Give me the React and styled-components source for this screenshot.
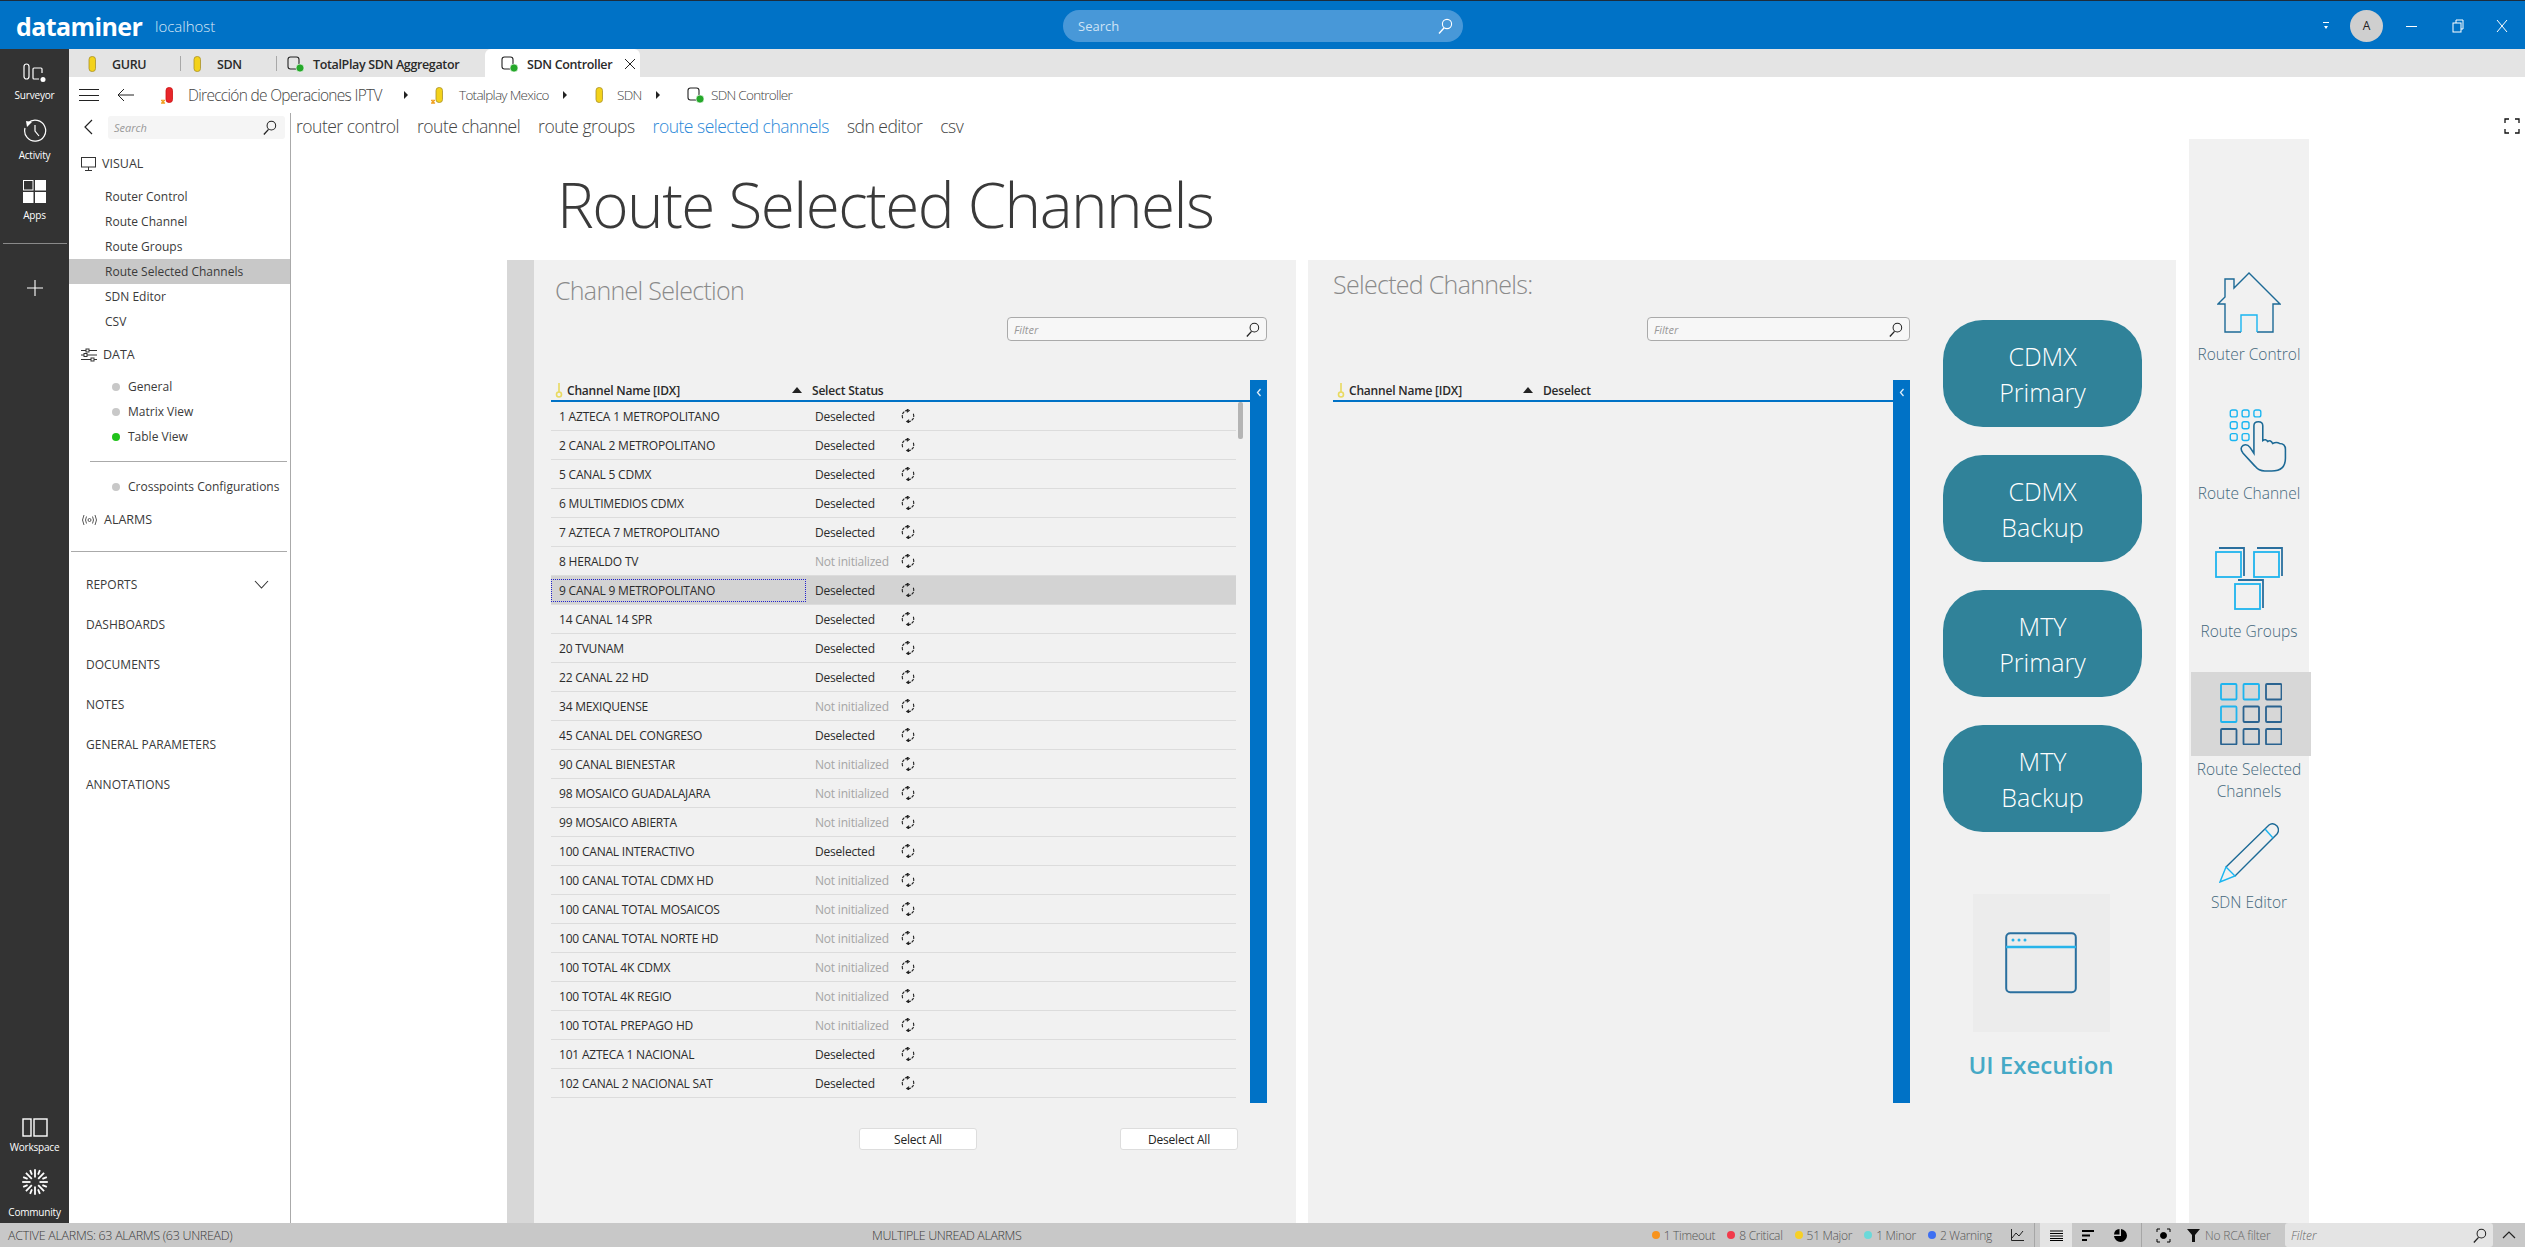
import React from 'react'
import styled, { createGlobalStyle } from 'styled-components'

const FONT = `"Open Sans", "Noto Sans", sans-serif`

const rows = [
    ['1 AZTECA 1 METROPOLITANO', 'Deselected'],
    ['2 CANAL 2 METROPOLITANO', 'Deselected'],
    ['5 CANAL 5 CDMX', 'Deselected'],
    ['6 MULTIMEDIOS CDMX', 'Deselected'],
    ['7 AZTECA 7 METROPOLITANO', 'Deselected'],
    ['8 HERALDO TV', 'Not initialized'],
    ['9 CANAL 9 METROPOLITANO', 'Deselected'],
    ['14 CANAL 14 SPR', 'Deselected'],
    ['20 TVUNAM', 'Deselected'],
    ['22 CANAL 22 HD', 'Deselected'],
    ['34 MEXIQUENSE', 'Not initialized'],
    ['45 CANAL DEL CONGRESO', 'Deselected'],
    ['90 CANAL BIENESTAR', 'Not initialized'],
    ['98 MOSAICO GUADALAJARA', 'Not initialized'],
    ['99 MOSAICO ABIERTA', 'Not initialized'],
    ['100 CANAL INTERACTIVO', 'Deselected'],
    ['100 CANAL TOTAL CDMX HD', 'Not initialized'],
    ['100 CANAL TOTAL MOSAICOS', 'Not initialized'],
    ['100 CANAL TOTAL NORTE HD', 'Not initialized'],
    ['100 TOTAL 4K CDMX', 'Not initialized'],
    ['100 TOTAL 4K REGIO', 'Not initialized'],
    ['100 TOTAL PREPAGO HD', 'Not initialized'],
    ['101 AZTECA 1 NACIONAL', 'Deselected'],
    ['102 CANAL 2 NACIONAL SAT', 'Deselected'],
]

const Global = createGlobalStyle`
    html, body { margin: 0; padding: 0; background: #fff; }
    body { font-family: ${FONT}; color: #333; }
    * { box-sizing: border-box; }
`

/* icons */
const SearchIcon = ({ size = 16, color = '#222' }) => (
    <svg width={size} height={size} viewBox="0 0 16 16" fill="none" stroke={color} strokeWidth="1.1">
        <circle cx="10" cy="6" r="4.6" />
        <path d="M7 10 L2 15.5" strokeWidth="1.4" />
    </svg>
)

const Pill = ({ color = '#f3d21a', edge = '#a8912a', badge }) => (
    <svg width="14" height="17" viewBox="0 0 14 17">
        <rect x="5" y="0.5" width="6.5" height="15" rx="3" fill={color} stroke={edge} strokeWidth="0.8" />
        {badge && <path d="M0 13 L4 16.5 M4 13 L0 16.5 M2 12.5 V17" stroke="#f0a020" strokeWidth="1.1" />}
    </svg>
)

const ServiceIcon = () => (
    <svg width="18" height="18" viewBox="0 0 18 18" fill="none">
        <rect x="1" y="2" width="11" height="12" rx="2.5" stroke="#222" strokeWidth="1.1" />
        <circle cx="13" cy="13" r="4" fill="#25a82a" stroke="#fff" strokeWidth="0.6" />
    </svg>
)

const RefreshIcon = () => (
    <svg width="14" height="14" viewBox="0 0 14 14" fill="none" stroke="#222" strokeWidth="1.1">
        <path d="M1.7 9.2 A5.6 5.6 0 0 1 7.6 1.4" strokeDasharray="3.2 0.9" />
        <path d="M5.8 0 L8.2 1.5 L5.8 3.2" />
        <path d="M12.3 4.8 A5.6 5.6 0 0 1 6.4 12.6" strokeDasharray="3.2 0.9" />
        <path d="M8.2 10.8 L5.8 12.5 L8.2 14" />
    </svg>
)

const KeyIcon = () => (
    <svg width="8" height="15" viewBox="0 0 8 15" fill="none" stroke="#e9da5f" strokeWidth="1.6">
        <path d="M4 0 V9" />
        <circle cx="4" cy="11.5" r="2.5" />
    </svg>
)

const CommunityIcon = () => (
    <svg width="26" height="26" viewBox="-13 -13 26 26" stroke="#fff" strokeWidth="1.8">
        {Array.from({ length: 16 }, (_, i) => {
            const a = (i * Math.PI) / 8
            const inner = i % 2 ? 8 : 4.5
            return (
                <line
                    key={i}
                    x1={Math.sin(a) * inner}
                    y1={-Math.cos(a) * inner}
                    x2={Math.sin(a) * 12.8}
                    y2={-Math.cos(a) * 12.8}
                />
            )
        })}
    </svg>
)

const Dot = styled.span`
    display: inline-block;
    width: ${p => p.$size || 8}px;
    height: ${p => p.$size || 8}px;
    border-radius: 50%;
    background: ${p => p.$color};
    flex: none;
`

const Page = styled.div`
    width: 2525px;
    height: 1247px;
    display: flex;
    flex-direction: column;
    overflow: hidden;
`

/* top bar */
const TopBar = styled.header`
    height: 49px;
    flex: none;
    background: #0072c6;
    border-top: 1px solid #1d2c3c;
    display: flex;
    align-items: center;
    color: #fff;
    padding: 1px 0 0 16px;
`
const Logo = styled.div`
    font-size: 25px;
    font-weight: 700;
    letter-spacing: -0.6px;
    width: 139px;
`
const Host = styled.div`
    font-size: 15px;
    font-weight: 300;
    color: #dbe9f6;
    width: 908px;
`
const GlobalSearch = styled.div`
    width: 400px;
    height: 32px;
    border-radius: 16px;
    background: #4898d8;
    display: flex;
    align-items: center;
    justify-content: space-between;
    padding: 0 10px 0 15px;
    font-size: 13px;
    color: #cfe3f5;
`
const WindowControls = styled.div`
    margin-left: auto;
    display: flex;
    align-items: center;
    padding-right: 16px;
`
const Caret = styled.div`
    width: 6px;
    height: 8px;
    margin-right: 21px;
    border-top: 1px solid #fff;
    position: relative;
    &::after {
        content: '';
        position: absolute;
        top: 3px;
        left: 1px;
        border-left: 2px solid transparent;
        border-right: 2px solid transparent;
        border-top: 3px solid #fff;
    }
`
const Avatar = styled.div`
    width: 33px;
    height: 32px;
    border-radius: 50%;
    background: #cfcfcf;
    color: #222;
    font-size: 12px;
    display: flex;
    align-items: center;
    justify-content: center;
    margin-right: 22px;
`
const WinBtn = styled.svg`
    width: 14px;
    height: 14px;
    margin-right: ${p => p.$gap || 0}px;
`

/* frame */
const Frame = styled.div`
    flex: 1;
    min-height: 0;
    display: flex;
`
const Rail = styled.nav`
    width: 69px;
    flex: none;
    background: #333;
    display: flex;
    flex-direction: column;
    align-items: center;
    color: #fff;
`
const RailItem = styled.div`
    width: 100%;
    height: ${p => p.$height || 60}px;
    flex: none;
    display: flex;
    flex-direction: column;
    align-items: center;
    justify-content: flex-end;
    padding-bottom: 7px;
    font-size: 10px;
    line-height: 14px;
    letter-spacing: -0.2px;
    svg { margin-bottom: ${p => p.$iconGap || 5}px; }
`
const RailDivider = styled.div`
    width: 64px;
    height: 1px;
    background: #8a8a8a;
    margin-top: 14px;
`
const RailPlus = styled.div`
    margin-top: 36px;
    display: flex;
`
const RailBottom = styled.div`
    margin-top: auto;
    margin-bottom: -3px;
    width: 100%;
    display: flex;
    flex-direction: column;
`

const Main = styled.div`
    flex: 1;
    min-width: 0;
    display: flex;
    flex-direction: column;
`
const TabStrip = styled.div`
    height: 28px;
    flex: none;
    background: #e4e4e4;
    display: flex;
    padding-left: 15px;
    align-items: stretch;
`
const Tab = styled.div`
    width: ${p => p.$width}px;
    display: flex;
    align-items: center;
    gap: ${p => p.$gap || 8}px;
    padding-left: ${p => p.$pad || 0}px;
    padding-top: 2px;
    font-size: 12.5px;
    font-weight: 600;
    letter-spacing: -0.35px;
    color: #2a2a2a;
    position: relative;
    background: ${p => (p.$active ? '#fff' : 'transparent')};
    border-radius: ${p => (p.$active ? '6px 6px 0 0' : '0')};
`
const TabDivider = styled.span`
    width: 1px;
    height: 15px;
    background: #a8a8a8;
    align-self: center;
    margin-right: ${p => p.$gap}px;
`
const TabClose = styled.svg`
    width: 12px;
    height: 12px;
    margin-left: 4px;
`

const Crumbs = styled.div`
    height: 36px;
    flex: none;
    display: flex;
    align-items: center;
    padding-left: 10px;
    color: #444;
`
const Burger = styled.div`
    width: 20px;
    height: 12px;
    border-top: 1px solid #222;
    border-bottom: 1px solid #222;
    margin-right: 18px;
    position: relative;
    &::after {
        content: '';
        position: absolute;
        left: 0;
        right: 0;
        top: 4.5px;
        height: 1px;
        background: #222;
    }
`
const Crumb = styled.div`
    display: flex;
    align-items: center;
    font-size: ${p => p.$size}px;
    font-weight: 300;
    letter-spacing: -0.7px;
    gap: ${p => p.$gap}px;
    width: ${p => p.$width}px;
    white-space: nowrap;
`
const CrumbArrow = styled.span`
    width: 0;
    height: 0;
    border-left: 4px solid #222;
    border-top: 4px solid transparent;
    border-bottom: 4px solid transparent;
    flex: none;
    margin-left: auto;
    margin-right: ${p => p.$gap}px;
`

const Content = styled.div`
    flex: 1;
    min-height: 0;
    display: flex;
`

/* sidebar */
const Sidebar = styled.aside`
    width: 222px;
    flex: none;
    border-right: 1px solid #aaa;
    display: flex;
    flex-direction: column;
    font-size: 12px;
    color: #3a3a3a;
`
const SideSearchRow = styled.div`
    height: 38px;
    flex: none;
    display: flex;
    align-items: center;
    padding: 0 4px 10px 15px;
    gap: 15px;
`
const SideSearch = styled.div`
    width: 177px;
    height: 23px;
    background: #f5f5f5;
    border-radius: 3px;
    display: flex;
    align-items: center;
    justify-content: space-between;
    padding: 0 8px 0 6px;
    font-size: 11px;
    font-style: italic;
    color: #999;
`
const SideHead = styled.div`
    height: 25px;
    flex: none;
    display: flex;
    align-items: center;
    gap: 6px;
    padding-left: 12px;
    margin-top: ${p => p.$top || 0}px;
    font-size: 12.5px;
`
const SideItem = styled.div`
    height: 25px;
    flex: none;
    display: flex;
    align-items: center;
    padding-left: 36px;
    margin-top: ${p => p.$top || 0}px;
    background: ${p => (p.$active ? '#c8c8c8' : 'transparent')};
`
const SideDataItem = styled(SideItem)`
    padding-left: 43px;
    gap: 8px;
`
const SideRule = styled.div`
    height: 1px;
    background: #aaa;
    margin-left: ${p => p.$left}px;
    margin-right: 3px;
    margin-top: ${p => p.$top}px;
    flex: none;
`
const SideLink = styled.div`
    height: 40px;
    flex: none;
    display: flex;
    align-items: center;
    justify-content: space-between;
    padding: 0 21px 0 17px;
    margin-top: ${p => p.$top || 0}px;
`

/* workspace */
const Workspace = styled.main`
    flex: 1;
    min-width: 0;
    display: flex;
    flex-direction: column;
    position: relative;
`
const DashTabs = styled.div`
    height: 26px;
    flex: none;
    display: flex;
    align-items: center;
    gap: 18px;
    padding-left: 5px;
    font-size: 17.5px;
    font-weight: 300;
    letter-spacing: -0.5px;
    color: #444;
`
const DashTab = styled.span`
    color: ${p => (p.$active ? '#2b88d8' : '#444')};
`
const FullScreen = styled.svg`
    position: absolute;
    top: 5px;
    right: 5px;
    width: 16px;
    height: 16px;
`
const Board = styled.div`
    flex: 1;
    min-height: 0;
    display: flex;
    padding-left: 216px;
`
const Center = styled.div`
    width: 1682px;
    flex: none;
    display: flex;
    flex-direction: column;
`
const Title = styled.h1`
    height: 121px;
    flex: none;
    margin: 0;
    padding: 23px 0 0 50px;
    font-size: 62px;
    line-height: 84px;
    font-weight: 300;
    letter-spacing: -1.55px;
    color: #3a3a3a;
`
const Panels = styled.div`
    flex: 1;
    min-height: 0;
    display: flex;
    gap: 12px;
`
const ChannelPanel = styled.section`
    width: 789px;
    flex: none;
    background: #f1f1f1;
    border-left: 27px solid #d7d7d7;
    padding: 12px 29px 0 17px;
    display: flex;
    flex-direction: column;
`
const SelectedPanel = styled.section`
    width: 868px;
    flex: none;
    background: #f1f1f1;
    padding: 6px 0 0 25px;
    display: flex;
    gap: 33px;
`
const SelectedList = styled.div`
    width: 577px;
    flex: none;
    display: flex;
    flex-direction: column;
`
const PanelTitle = styled.h2`
    margin: 0 0 0 ${p => p.$left || 0}px;
    font-size: 25px;
    line-height: 36px;
    font-weight: 300;
    letter-spacing: -0.7px;
    color: #8a8a8a;
`
const FilterBox = styled.div`
    width: ${p => p.$width}px;
    height: 24px;
    flex: none;
    align-self: flex-end;
    margin-top: ${p => p.$top}px;
    background: #f7f7f7;
    border: 1px solid #aaa;
    border-radius: 4px;
    display: flex;
    align-items: center;
    justify-content: space-between;
    padding: 0 6px;
    font-size: 11px;
    font-style: italic;
    color: #999;
`
const TableArea = styled.div`
    height: 723px;
    flex: none;
    margin-top: 39px;
    display: flex;
`
const TableWrap = styled.div`
    flex: 1;
    min-width: 0;
    position: relative;
`
const CollapseBar = styled.div`
    width: 17px;
    flex: none;
    background: #0072c6;
    display: flex;
    justify-content: center;
    padding-top: 8px;
`
const HeadRow = styled.div`
    height: 22px;
    display: grid;
    grid-template-columns: ${p => p.$cols};
    border-bottom: 2px solid #0072c6;
    font-size: 12px;
    font-weight: 600;
    letter-spacing: -0.2px;
    color: #2a2a2a;
    align-items: center;
`
const HeadName = styled.div`
    display: flex;
    align-items: center;
    gap: 4px;
    padding-left: 4px;
    padding-right: 4px;
    svg { flex: none; }
`
const SortArrow = styled.span`
    margin-left: auto;
    width: 0;
    height: 0;
    border-left: 5px solid transparent;
    border-right: 5px solid transparent;
    border-bottom: 6px solid #222;
`
const HeadStatus = styled.div`
    padding-left: 6px;
`
const Row = styled.div`
    width: 685px;
    height: 29px;
    display: grid;
    grid-template-columns: 255px 95px 1fr;
    align-items: center;
    border-bottom: 1px solid #dcdcdc;
    background: ${p => (p.$selected ? '#d3d3d3' : 'transparent')};
    font-size: 12px;
    letter-spacing: -0.2px;
    color: #2c2c2c;
`
const NameCell = styled.div`
    height: 23px;
    display: flex;
    align-items: center;
    padding-left: 7px;
    border: 1px dotted ${p => (p.$focus ? '#2222cc' : 'transparent')};
    white-space: nowrap;
`
const StatusCell = styled.div`
    padding-left: 9px;
    white-space: nowrap;
    color: ${p => (p.$muted ? '#a5a5a5' : '#2c2c2c')};
`
const ScrollThumb = styled.div`
    position: absolute;
    top: 22px;
    right: 7px;
    width: 5px;
    height: 37px;
    border-radius: 2px;
    background: #b4b4b4;
`
const TableButtons = styled.div`
    margin-top: 25px;
    display: flex;
    justify-content: space-between;
    padding-left: 308px;
    padding-right: 29px;
`
const SmallButton = styled.button`
    width: 118px;
    height: 22px;
    padding: 0;
    background: #fff;
    border: 1px solid #ddd;
    border-radius: 3px;
    font-family: ${FONT};
    font-size: 12px;
    letter-spacing: -0.2px;
    color: #222;
`
const ActionColumn = styled.div`
    width: 199px;
    flex: none;
    display: flex;
    flex-direction: column;
    align-items: center;
    padding-top: 54px;
    gap: 28px;
`
const ActionButton = styled.button`
    width: 199px;
    height: 107px;
    flex: none;
    padding: 0;
    border: none;
    border-radius: 40px;
    background: #308299;
    color: #fff;
    font-family: ${FONT};
    font-size: 25px;
    line-height: 36px;
    font-weight: 300;
`
const ExecTile = styled.div`
    width: 137px;
    height: 138px;
    flex: none;
    margin-top: 34px;
    margin-right: 3px;
    background: #ececec;
    display: flex;
    align-items: center;
    justify-content: center;
`
const ExecLabel = styled.div`
    margin-top: -12px;
    margin-right: 3px;
    font-size: 24px;
    line-height: 34px;
    font-weight: 600;
    color: #45a9c6;
    white-space: nowrap;
`

/* right rail */
const Shortcuts = styled.div`
    width: 120px;
    flex: none;
    margin-left: 0;
    background: #f1f1f1;
    padding-top: 133px;
    display: flex;
    flex-direction: column;
    align-items: center;
`
const Shortcut = styled.div`
    width: 100%;
    margin-top: ${p => p.$top || 0}px;
    display: flex;
    flex-direction: column;
    align-items: center;
    font-size: 15.5px;
    line-height: 22px;
    font-weight: 300;
    color: #44687c;
    text-align: center;
`
const ShortcutIcon = styled.svg`
    display: block;
    margin-bottom: ${p => p.$gap ?? 10}px;
`
const ActiveIconBox = styled.div`
    width: 120px;
    height: 84px;
    margin-left: 4px;
    margin-bottom: 2px;
    background: #d7d7d7;
    display: flex;
    align-items: center;
    justify-content: center;
`

/* status bar */
const StatusBar = styled.footer`
    height: 24px;
    flex: none;
    background: #c8c8c8;
    display: flex;
    align-items: center;
    font-size: 12.5px;
    font-weight: 300;
    color: #3c3c3c;
`
const StatusLeft = styled.div`
    width: 872px;
    flex: none;
    padding-left: 8px;
    letter-spacing: -0.3px;
`
const StatusMid = styled.div`
    letter-spacing: -0.4px;
`
const StatusRight = styled.div`
    margin-left: auto;
    display: flex;
    align-items: center;
    height: 100%;
`
const Counter = styled.div`
    display: flex;
    align-items: center;
    gap: 4px;
    font-size: 12px;
    letter-spacing: -0.3px;
    color: #555;
    margin-right: ${p => p.$gap}px;
`
const StatusDivider = styled.span`
    width: 1px;
    height: 100%;
    background: #a6a6a6;
`
const StatusTool = styled.div`
    width: 32px;
    height: 100%;
    display: flex;
    align-items: center;
    justify-content: center;
    background: ${p => (p.$active ? '#e4e4e4' : 'transparent')};
    margin-left: ${p => p.$left || 0}px;
    margin-right: ${p => p.$right || 0}px;
`
const RcaFilter = styled.div`
    display: flex;
    align-items: center;
    gap: 5px;
    width: 98px;
    font-size: 12px;
    letter-spacing: -0.2px;
    color: #666;
    margin-left: 2px;
`
const StatusFilter = styled.div`
    width: 208px;
    height: 100%;
    margin-left: 0;
    background: #e4e4e4;
    border-radius: 3px;
    display: flex;
    align-items: center;
    justify-content: space-between;
    padding: 0 6px;
    font-size: 12px;
    font-style: italic;
    color: #666;
`

const CollapseChevron = () => (
    <svg width="6" height="9" viewBox="0 0 6 9" fill="none" stroke="#dcecf8" strokeWidth="1.3">
        <path d="M4.5 1 L1.5 4.5 L4.5 8" />
    </svg>
)

const HomeGlyph = () => (
    <ShortcutIcon width="64" height="61" viewBox="0 0 64 61" fill="none" stroke="#1d6a96" strokeWidth="1.4">
        <path d="M24 60 H8 V32 H1 L8 25 V7 H17 V16 L32 1 L63 32 H56 V60 H40" />
        <path d="M24 60 V43 H40 V60" stroke="#19b5f1" />
    </ShortcutIcon>
)

const TouchGlyph = () => (
    <ShortcutIcon width="76" height="63" viewBox="0 0 76 64" fill="none">
        {[[0, 0], [12, 0], [24, 0], [0, 12], [12, 12], [0, 24], [12, 24]].map(([x, y]) => (
            <rect key={`${x}-${y}`} x={x + 19} y={y + 1} width="7" height="7" rx="2" stroke="#19b5f1" strokeWidth="1.4" />
        ))}
        <path
            d="M43 45 V17 Q43 13 47.5 13 Q52 13 52 17 V32 Q55 30 57 33 Q60 31 62 35 Q66 33 69 35 Q75 35 75 41 V50 Q75 63 61 63 H54 Q48 63 44 58 L32 45 Q28 40 32 37 Q36 35 39 39 Z"
            stroke="#1d6a96"
            strokeWidth="1.6"
        />
    </ShortcutIcon>
)

const GroupsGlyph = () => (
    <ShortcutIcon width="68" height="63" viewBox="0 0 68 63" fill="none">
        {[[0, 4], [38, 4], [19, 36]].map(([x, y]) => (
            <g key={x}>
                <path d={`M${x + 4} ${y - 3} H${x + 29} V${y + 25}`} stroke="#2a6f9e" strokeWidth="1.8" />
                <rect x={x + 1} y={y + 1} width="25" height="25" stroke="#1fb4ee" strokeWidth="1.8" />
            </g>
        ))}
    </ShortcutIcon>
)

const GridGlyph = () => {
    const light = ['0-0', '1-0', '0-1']
    const cells = []
    for (let y = 0; y < 3; y++) {
        for (let x = 0; x < 3; x++) {
            cells.push(
                <rect
                    key={`${x}-${y}`}
                    x={x * 22.5 + 1}
                    y={y * 22.5 + 1}
                    width="15.5"
                    height="15.5"
                    rx="1"
                    stroke={light.includes(`${x}-${y}`) ? '#1fb4ee' : '#2a6390'}
                    strokeWidth="1.8"
                />
            )
        }
    }
    return <ShortcutIcon $gap={0} width="62" height="62" viewBox="0 0 62 62" fill="none">{cells}</ShortcutIcon>
}

const PencilGlyph = () => (
    <ShortcutIcon $gap={8} width="60" height="60" viewBox="0 0 60 60" fill="none" strokeWidth="1.4">
        <path d="M7 44 L50 2 Q54 -1 58 3 Q61 7 58 11 L16 53" stroke="#1d6a96" />
        <path d="M46 6 L54 15" stroke="#19b5f1" />
        <path d="M7 44 L16 53 L1 59 Z M7 44" stroke="#19b5f1" />
    </ShortcutIcon>
)

const WindowGlyph = () => (
    <svg width="72" height="62" viewBox="0 0 72 62" fill="none">
        <rect x="1.2" y="1.2" width="69.6" height="59" rx="4" stroke="#2a6f9e" strokeWidth="2" />
        <path d="M1 15 H71" stroke="#27b4ea" strokeWidth="2.4" />
        <circle cx="8" cy="8" r="1.5" fill="#27b4ea" />
        <circle cx="14" cy="8" r="1.5" fill="#27b4ea" />
        <circle cx="20" cy="8" r="1.5" fill="#27b4ea" />
    </svg>
)

const ChannelRows = () => rows.map(([name, status], i) => (
    <Row key={name} $selected={i === 6}>
        <NameCell $focus={i === 6}>{name}</NameCell>
        <StatusCell $muted={status !== 'Deselected'}>{status}</StatusCell>
        <RefreshIcon />
    </Row>
))

const App = () => {
    return (
        <Page>
            <Global />
            <TopBar>
                <Logo>dataminer</Logo>
                <Host>localhost</Host>
                <GlobalSearch>Search<SearchIcon color="#fff" /></GlobalSearch>
                <WindowControls>
                    <Caret />
                    <Avatar>A</Avatar>
                    <WinBtn $gap={32} viewBox="0 0 14 14" stroke="#fff"><path d="M1 7.5 H12" /></WinBtn>
                    <WinBtn $gap={30} viewBox="0 0 14 14" fill="none" stroke="#fff"><rect x="2" y="4" width="8" height="9" /><path d="M5 4 V1 H12 V10 H10" /></WinBtn>
                    <WinBtn viewBox="0 0 14 14" stroke="#fff"><path d="M2 1 L12 13 M12 1 L2 13" /></WinBtn>
                </WindowControls>
            </TopBar>
            <Frame>
                <Rail>
                    <RailItem>
                        <svg width="24" height="20" viewBox="0 0 24 20" fill="none" stroke="#fff" strokeWidth="1.2">
                            <rect x="1" y="1" width="5" height="15" rx="2.5" />
                            <path d="M19 10 V6 Q19 5 18 5 H11 Q10 5 10 6 V15 Q10 16 11 16 H16" />
                            <circle cx="20" cy="16.5" r="2.5" fill="#fff" stroke="none" />
                        </svg>
                        Surveyor
                    </RailItem>
                    <RailItem>
                        <svg width="24" height="24" viewBox="0 0 24 24" fill="none" stroke="#fff" strokeWidth="1.2">
                            <path d="M5 4 A10.5 10.5 0 1 1 2 9" />
                            <path d="M3 2 L9 3 L4 8 Z" fill="#fff" stroke="none" />
                            <path d="M12 6 V12 L16 17" />
                        </svg>
                        Activity
                    </RailItem>
                    <RailItem>
                        <svg width="23" height="23" viewBox="0 0 23 23" fill="none">
                            <rect x="0.5" y="0.5" width="9.5" height="9.5" stroke="#fff" />
                            <rect x="12" y="0" width="11" height="10.5" fill="#fff" />
                            <rect x="0" y="12" width="10.5" height="11" fill="#fff" />
                            <rect x="12" y="12" width="11" height="11" fill="#fff" />
                        </svg>
                        Apps
                    </RailItem>
                    <RailDivider />
                    <RailPlus>
                        <svg width="16" height="16" viewBox="0 0 16 16" stroke="#fff" strokeWidth="1.1"><path d="M8 0 V16 M0 8 H16" /></svg>
                    </RailPlus>
                    <RailBottom>
                        <RailItem $iconGap={3} $height={55}>
                            <svg width="26" height="19" viewBox="0 0 26 19" fill="none" stroke="#fff" strokeWidth="1.4">
                                <rect x="1" y="1" width="8" height="17" />
                                <rect x="12" y="1" width="13" height="17" />
                            </svg>
                            Workspace
                        </RailItem>
                        <RailItem $iconGap={10} $height={65}>
                            <CommunityIcon />
                            Community
                        </RailItem>
                    </RailBottom>
                </Rail>
                <Main>
                    <TabStrip>
                        <Tab $width={96} $gap={14}><Pill />GURU</Tab>
                        <TabDivider $gap={8} />
                        <Tab $width={87} $gap={14}><Pill />SDN</Tab>
                        <TabDivider $gap={10} />
                        <Tab $width={198}><ServiceIcon />TotalPlay SDN Aggregator</Tab>
                        <Tab $active $width={155} $pad={16}>
                            <ServiceIcon />SDN Controller
                            <TabClose viewBox="0 0 12 12" stroke="#222"><path d="M1 1 L11 11 M11 1 L1 11" /></TabClose>
                        </Tab>
                    </TabStrip>
                    <Crumbs>
                        <Burger />
                        <svg width="18" height="14" viewBox="0 0 18 14" fill="none" stroke="#222" style={{ marginRight: 26 }}><path d="M7 1 L1 7 L7 13 M1 7 H17" /></svg>
                        <Crumb $size={15.5} $gap={13} $width={270}>
                            <Pill color="#e8262a" edge="#c11" badge />Dirección de Operaciones IPTV
                            <CrumbArrow $gap={23} />
                        </Crumb>
                        <Crumb $size={13.5} $gap={14} $width={160}>
                            <Pill badge />Totalplay Mexico
                            <CrumbArrow $gap={24} />
                        </Crumb>
                        <Crumb $size={13.5} $gap={12} $width={96}>
                            <Pill />SDN
                            <CrumbArrow $gap={27} />
                        </Crumb>
                        <Crumb $size={13.5} $gap={6}>
                            <ServiceIcon />SDN Controller
                        </Crumb>
                    </Crumbs>
                    <Content>
                        <Sidebar>
                            <SideSearchRow>
                                <svg width="9" height="16" viewBox="0 0 9 16" fill="none" stroke="#222" strokeWidth="1.2" style={{ flex: 'none' }}><path d="M8 1 L1 8 L8 15" /></svg>
                                <SideSearch>Search<SearchIcon size={15} /></SideSearch>
                            </SideSearchRow>
                            <SideHead>
                                <svg width="15" height="14" viewBox="0 0 15 14" fill="none" stroke="#333"><rect x="0.5" y="0.5" width="14" height="9.5" /><path d="M7.5 10 V13 M4 13.5 H11" /></svg>
                                VISUAL
                            </SideHead>
                            <SideItem $top={8}>Router Control</SideItem>
                            <SideItem>Route Channel</SideItem>
                            <SideItem>Route Groups</SideItem>
                            <SideItem $active>Route Selected Channels</SideItem>
                            <SideItem>SDN Editor</SideItem>
                            <SideItem>CSV</SideItem>
                            <SideHead $top={8}>
                                <svg width="16" height="14" viewBox="0 0 16 14" fill="none" stroke="#333"><path d="M0 2.5 H16 M0 7 H16 M0 11.5 H16" /><rect x="5" y="1" width="3" height="3" fill="#fff" /><rect x="3" y="5.5" width="3" height="3" fill="#fff" /><rect x="10" y="10" width="3" height="3" fill="#fff" /></svg>
                                DATA
                            </SideHead>
                            <SideDataItem $top={7}><Dot $color="#c8c8c8" />General</SideDataItem>
                            <SideDataItem><Dot $color="#c8c8c8" />Matrix View</SideDataItem>
                            <SideDataItem><Dot $color="#21c31b" />Table View</SideDataItem>
                            <SideRule $left={21} $top={12} />
                            <SideDataItem $top={12}><Dot $color="#c8c8c8" />Crosspoints Configurations</SideDataItem>
                            <SideHead $top={8}>
                                <svg width="17" height="12" viewBox="0 0 17 12" fill="none" stroke="#444" strokeWidth="0.9"><circle cx="8.5" cy="6" r="1.5" /><path d="M5.5 2.5 Q3.5 6 5.5 9.5 M11.5 2.5 Q13.5 6 11.5 9.5 M3 1 Q0 6 3 11 M14 1 Q17 6 14 11" /></svg>
                                ALARMS
                            </SideHead>
                            <SideRule $left={2} $top={19} />
                            <SideLink $top={12}>
                                REPORTS
                                <svg width="15" height="9" viewBox="0 0 15 9" fill="none" stroke="#333" strokeWidth="1.1"><path d="M1 1 L7.5 8 L14 1" /></svg>
                            </SideLink>
                            <SideLink>DASHBOARDS</SideLink>
                            <SideLink>DOCUMENTS</SideLink>
                            <SideLink>NOTES</SideLink>
                            <SideLink>GENERAL PARAMETERS</SideLink>
                            <SideLink>ANNOTATIONS</SideLink>
                        </Sidebar>
                        <Workspace>
                            <DashTabs>
                                <DashTab>router control</DashTab>
                                <DashTab>route channel</DashTab>
                                <DashTab>route groups</DashTab>
                                <DashTab $active>route selected channels</DashTab>
                                <DashTab>sdn editor</DashTab>
                                <DashTab>csv</DashTab>
                            </DashTabs>
                            <FullScreen viewBox="0 0 16 16" fill="none" stroke="#111" strokeWidth="1.3">
                                <path d="M1 5 V1 H5 M11 1 H15 V5 M15 11 V15 H11 M5 15 H1 V11" />
                            </FullScreen>
                            <Board>
                                <Center>
                                    <Title>Route Selected Channels</Title>
                                    <Panels>
                                        <ChannelPanel>
                                            <PanelTitle $left={4}>Channel Selection</PanelTitle>
                                            <FilterBox $width={260} $top={9}>Filter<SearchIcon size={15} /></FilterBox>
                                            <TableArea>
                                                <TableWrap>
                                                    <HeadRow $cols="255px 1fr">
                                                        <HeadName><KeyIcon />Channel Name [IDX]<SortArrow /></HeadName>
                                                        <HeadStatus>Select Status</HeadStatus>
                                                    </HeadRow>
                                                    <ChannelRows />
                                                    <ScrollThumb />
                                                </TableWrap>
                                                <CollapseBar><CollapseChevron /></CollapseBar>
                                            </TableArea>
                                            <TableButtons>
                                                <SmallButton>Select All</SmallButton>
                                                <SmallButton>Deselect All</SmallButton>
                                            </TableButtons>
                                        </ChannelPanel>
                                        <SelectedPanel>
                                            <SelectedList>
                                                <PanelTitle>Selected Channels:</PanelTitle>
                                                <FilterBox $width={263} $top={15}>Filter<SearchIcon size={15} /></FilterBox>
                                                <TableArea>
                                                    <TableWrap>
                                                        <HeadRow $cols="204px 1fr">
                                                            <HeadName><KeyIcon />Channel Name [IDX]<SortArrow /></HeadName>
                                                            <HeadStatus>Deselect</HeadStatus>
                                                        </HeadRow>
                                                    </TableWrap>
                                                    <CollapseBar><CollapseChevron /></CollapseBar>
                                                </TableArea>
                                            </SelectedList>
                                            <ActionColumn>
                                                <ActionButton>CDMX<br />Primary</ActionButton>
                                                <ActionButton>CDMX<br />Backup</ActionButton>
                                                <ActionButton>MTY<br />Primary</ActionButton>
                                                <ActionButton>MTY<br />Backup</ActionButton>
                                                <ExecTile><WindowGlyph /></ExecTile>
                                                <ExecLabel>UI Execution</ExecLabel>
                                            </ActionColumn>
                                        </SelectedPanel>
                                    </Panels>
                                </Center>
                                <Shortcuts>
                                    <Shortcut><HomeGlyph />Router Control</Shortcut>
                                    <Shortcut $top={44}><TouchGlyph />Route Channel</Shortcut>
                                    <Shortcut $top={43}><GroupsGlyph />Route Groups</Shortcut>
                                    <Shortcut $top={30}>
                                        <ActiveIconBox><GridGlyph /></ActiveIconBox>
                                        Route Selected<br />Channels
                                    </Shortcut>
                                    <Shortcut $top={21}><PencilGlyph />SDN Editor</Shortcut>
                                </Shortcuts>
                            </Board>
                        </Workspace>
                    </Content>
                </Main>
            </Frame>
            <StatusBar>
                <StatusLeft>ACTIVE ALARMS: 63 ALARMS (63 UNREAD)</StatusLeft>
                <StatusMid>MULTIPLE UNREAD ALARMS</StatusMid>
                <StatusRight>
                    <Counter $gap={12}><Dot $color="#f7931e" />1 Timeout</Counter>
                    <Counter $gap={12}><Dot $color="#f23a4b" />8 Critical</Counter>
                    <Counter $gap={12}><Dot $color="#f7d027" />51 Major</Counter>
                    <Counter $gap={12}><Dot $color="#6bd9d9" />1 Minor</Counter>
                    <Counter $gap={19}><Dot $color="#3d6ff2" />2 Warning</Counter>
                    <svg width="13" height="12" viewBox="0 0 13 12" fill="none" stroke="#222" style={{ marginRight: 10 }}><path d="M0.5 0 V11.5 H13 M1 9 L5 4 L8 7 L12 2" /></svg>
                    <StatusDivider />
                    <StatusTool $active $left={5}>
                        <svg width="13" height="11" viewBox="0 0 13 11" stroke="#000" strokeWidth="1.2"><path d="M0 1 H13 M0 3.5 H13 M0 6 H13 M0 8.5 H13 M0 10.7 H13" /></svg>
                    </StatusTool>
                    <StatusTool>
                        <svg width="12" height="11" viewBox="0 0 12 11" stroke="#000" strokeWidth="1.8"><path d="M0 1 H12 M0 5.5 H8 M0 10 H5" /></svg>
                    </StatusTool>
                    <StatusTool $right={5}>
                        <svg width="13" height="13" viewBox="0 0 13 13"><path d="M7 0 A6.5 6.5 0 1 1 0 7 H7 Z M5.5 0 V5.5 H0 A6 6 0 0 1 5.5 0" fill="#000" /></svg>
                    </StatusTool>
                    <StatusDivider />
                    <StatusTool $left={5} $right={6}>
                        <svg width="15" height="15" viewBox="0 0 15 15" fill="none" stroke="#000"><path d="M1 4 V1 H4 M11 1 H14 V4 M14 11 V14 H11 M4 14 H1 V11" /><circle cx="7.5" cy="7.5" r="3" fill="#000" /></svg>
                    </StatusTool>
                    <RcaFilter>
                        <svg width="13" height="13" viewBox="0 0 13 13"><path d="M0 0 H13 L8 6 V13 H5 V6 Z" fill="#111" /></svg>
                        No RCA filter
                    </RcaFilter>
                    <StatusFilter>Filter<SearchIcon size={15} /></StatusFilter>
                    <StatusTool>
                        <svg width="14" height="8" viewBox="0 0 14 8" fill="none" stroke="#222" strokeWidth="1.2"><path d="M1 7 L7 1 L13 7" /></svg>
                    </StatusTool>
                </StatusRight>
            </StatusBar>
        </Page>
    )
}

export default App
